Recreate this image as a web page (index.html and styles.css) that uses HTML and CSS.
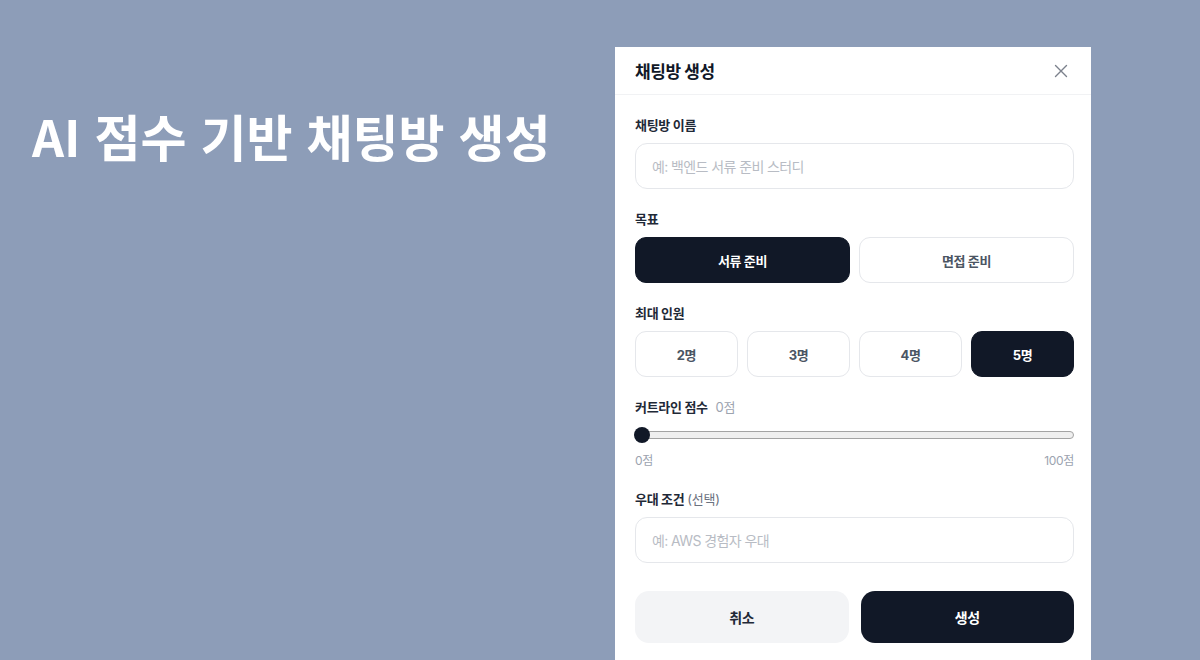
FILE: index.html
```html
<!DOCTYPE html>
<html lang="ko">
<head>
<meta charset="utf-8">
<title>AI 점수 기반 채팅방 생성</title>
<link rel="stylesheet" href="styles.css">
</head>
<body>
<div class="page">
  <section class="hero">
    <h1 class="hero-title">AI 점수 기반 채팅방 생성</h1>
  </section>
  <div class="modal">
    <header class="modal-header">
      <h2 class="modal-title">채팅방 생성</h2>
      <button class="close-btn" type="button" aria-label="닫기">
        <svg width="14" height="14" viewBox="0 0 14 14" fill="none" stroke="#7b818c" stroke-width="1.4" stroke-linecap="round"><path d="M1.5 1.5L12.5 12.5M12.5 1.5L1.5 12.5"/></svg>
      </button>
    </header>
    <div class="modal-body">
      <div class="field">
        <div class="label">채팅방 이름</div>
        <input class="text-input" type="text" placeholder="예: 백엔드 서류 준비 스터디">
      </div>
      <div class="field">
        <div class="label">목표</div>
        <div class="options two">
          <button class="opt active" type="button">서류 준비</button>
          <button class="opt" type="button">면접 준비</button>
        </div>
      </div>
      <div class="field">
        <div class="label">최대 인원</div>
        <div class="options four">
          <button class="opt" type="button">2명</button>
          <button class="opt" type="button">3명</button>
          <button class="opt" type="button">4명</button>
          <button class="opt active" type="button">5명</button>
        </div>
      </div>
      <div class="field">
        <div class="label">커트라인 점수 <span class="label-value">0점</span></div>
        <div class="slider">
          <div class="slider-track"></div>
          <div class="slider-thumb"></div>
        </div>
        <div class="slider-scale"><span>0점</span><span>100점</span></div>
      </div>
      <div class="field">
        <div class="label">우대 조건 <span class="label-sub">(선택)</span></div>
        <input class="text-input" type="text" placeholder="예: AWS 경험자 우대">
      </div>
      <div class="actions">
        <button class="btn btn-cancel" type="button">취소</button>
        <button class="btn btn-primary" type="button">생성</button>
      </div>
    </div>
  </div>
</div>
</body>
</html>
```
FILE: styles.css
```css
* { box-sizing: border-box; }
html, body {
  margin: 0;
  padding: 0;
  height: 660px;
  overflow: hidden;
}
body {
  background: #8d9db8;
  font-family: "Inter", "Noto Sans CJK KR", sans-serif;
  color: #111827;
}
.page {
  display: flex;
  align-items: flex-start;
  height: 660px;
}
.hero {
  width: 615px;
  flex: none;
  padding: 105px 0 0 32px;
}
.hero-title {
  margin: 0;
  font-family: "Noto Sans CJK KR", sans-serif;
  font-size: 50px;
  line-height: 60px;
  font-weight: 700;
  color: #ffffff;
  letter-spacing: 0;
}
.modal {
  width: 476px;
  flex: none;
  margin-top: 47px;
  background: #ffffff;
}
.modal-header {
  height: 48px;
  display: flex;
  align-items: center;
  justify-content: space-between;
  padding: 0 22px 0 20px;
  border-bottom: 1px solid #f1f2f4;
}
.modal-title {
  margin: 0;
  font-size: 17px;
  font-weight: 700;
  letter-spacing: -0.4px;
  color: #111827;
}
.close-btn {
  border: 0;
  background: none;
  padding: 0;
  width: 16px;
  height: 16px;
  display: flex;
  align-items: center;
  justify-content: center;
  cursor: pointer;
}
.modal-body {
  padding: 20px 17px 20px 20px;
}
.field {
  margin-bottom: 20px;
}
.label {
  font-size: 13px;
  line-height: 20px;
  font-weight: 700;
  color: #1f2937;
  letter-spacing: -0.3px;
  margin-bottom: 8px;
}
.label-value {
  font-weight: 400;
  color: #9ca3af;
  margin-left: 5px;
  letter-spacing: -0.2px;
}
.label-sub {
  font-weight: 400;
  color: #6b7280;
  letter-spacing: -0.2px;
}
.text-input {
  display: block;
  width: 100%;
  height: 46px;
  border: 1px solid #e5e7eb;
  border-radius: 12px;
  padding: 0 16px;
  font-family: inherit;
  font-size: 14px;
  letter-spacing: -0.6px;
  color: #111827;
  background: #fff;
  outline: none;
}
.text-input::placeholder {
  color: #b8bcc4;
}
.options {
  display: grid;
  gap: 9px;
}
.options.two { grid-template-columns: 1fr 1fr; }
.options.four { grid-template-columns: repeat(4, 1fr); }
.opt {
  height: 46px;
  border: 1px solid #e5e7eb;
  border-radius: 11px;
  background: #ffffff;
  font-family: inherit;
  font-size: 13px;
  font-weight: 700;
  letter-spacing: -0.4px;
  color: #4b5563;
  cursor: pointer;
}
.opt.active {
  background: #111827;
  border-color: #111827;
  color: #ffffff;
}
.slider {
  position: relative;
  height: 20px;
  display: flex;
  align-items: center;
}
.slider-track {
  width: 100%;
  height: 8px;
  background: #efefef;
  border: 1px solid #a3a3a3;
  border-radius: 4px;
}
.slider-thumb {
  position: absolute;
  left: -1px;
  top: 2px;
  width: 16px;
  height: 16px;
  border-radius: 50%;
  background: #111827;
}
.slider-scale {
  display: flex;
  justify-content: space-between;
  margin-top: 8px;
  font-size: 12px;
  line-height: 16px;
  color: #9ca3af;
  letter-spacing: -0.3px;
}
.actions {
  display: grid;
  grid-template-columns: 1fr 1fr;
  gap: 12px;
  margin-top: 28px;
}
.btn {
  height: 52px;
  border: 0;
  border-radius: 14px;
  font-family: inherit;
  font-size: 14px;
  font-weight: 700;
  letter-spacing: -0.4px;
  cursor: pointer;
}
.btn-cancel {
  background: #f3f4f6;
  color: #1f2937;
}
.btn-primary {
  background: #111827;
  color: #ffffff;
}
```
